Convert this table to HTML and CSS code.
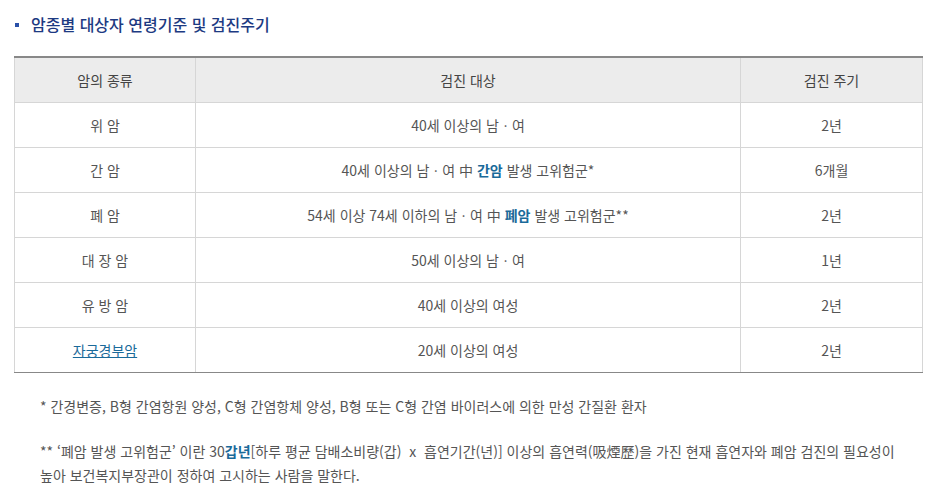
FILE: index.html
```html
<!DOCTYPE html>
<html lang="ko">
<head>
<meta charset="utf-8">
<link rel="stylesheet" href="styles.css">
</head>
<body>
<div class="wrap">
  <h3 class="title"><span class="bullet"></span>암종별 대상자 연령기준 및 검진주기</h3>
  <table class="tbl">
    <colgroup><col class="c1"><col class="c2"><col class="c3"></colgroup>
    <thead>
      <tr><th>암의 종류</th><th>검진 대상</th><th>검진 주기</th></tr>
    </thead>
    <tbody>
      <tr><td>위 암</td><td>40세 이상의 남ㆍ여</td><td>2년</td></tr>
      <tr><td>간 암</td><td>40세 이상의 남ㆍ여 中 <strong class="hl">간암</strong> 발생 고위험군*</td><td>6개월</td></tr>
      <tr><td>폐 암</td><td>54세 이상 74세 이하의 남ㆍ여 中 <strong class="hl">폐암</strong> 발생 고위험군**</td><td>2년</td></tr>
      <tr><td>대 장 암</td><td>50세 이상의 남ㆍ여</td><td>1년</td></tr>
      <tr><td>유 방 암</td><td>40세 이상의 여성</td><td>2년</td></tr>
      <tr><td><a class="link" href="#">자궁경부암</a></td><td>20세 이상의 여성</td><td>2년</td></tr>
    </tbody>
  </table>
  <div class="notes">
    <p>* 간경변증, B형 간염항원 양성, C형 간염항체 양성, B형 또는 C형 간염 바이러스에 의한 만성 간질환 환자</p>
    <p>** ‘폐암 발생 고위험군’ 이란 30<strong class="hl">갑년</strong>[하루 평균 담배소비량(갑)&nbsp; x &nbsp;흡연기간(년)] 이상의 흡연력(吸煙歷)을 가진 현재 흡연자와 폐암 검진의 필요성이 높아 보건복지부장관이 정하여 고시하는 사람을 말한다.</p>
  </div>
</div>
</body>
</html>
```
FILE: styles.css
```css
html, body {
  margin: 0;
  padding: 0;
  background: #fff;
}
body {
  font-family: "Noto Sans CJK KR", "Noto Sans", sans-serif;
  color: #555;
  font-size: 14px;
}
.wrap {
  padding: 12px 8px 0 14px;
}
.title {
  margin: 0 0 20px 0;
  display: flex;
  align-items: center;
  font-size: 16px;
  font-weight: 500;
  color: #1d3a82;
  height: 24px;
  letter-spacing: 0;
}
.bullet {
  display: inline-block;
  width: 4px;
  height: 4px;
  background: #2a50a8;
  margin: 2px 12px 0 1px;
}
.tbl {
  width: 908px;
  border-collapse: collapse;
  table-layout: fixed;
  border-top: 2px solid #888;
  border-bottom: 1px solid #888;
}
.c1 { width: 181px; }
.c2 { width: 545px; }
.c3 { width: 182px; }
.tbl th, .tbl td {
  border: 1px solid #d6d6d6;
  text-align: center;
  height: 44px;
  padding: 0;
  font-weight: 400;
  color: #555;
}
.tbl tbody tr:last-child td {
  border-bottom: 1px solid #888;
}
.tbl th {
  background: #ececec;
  color: #444;
  height: 44px;
}
.hl {
  color: #1a6a9a;
  font-weight: 700;
}
.link {
  color: #1a6a9a;
  text-decoration: underline;
}
.notes {
  width: 875px;
  padding: 21px 0 0 26px;
  font-size: 14px;
  line-height: 24px;
  color: #555;
  word-break: keep-all;
}
.notes p {
  margin: 0 0 21px 0;
}
```
